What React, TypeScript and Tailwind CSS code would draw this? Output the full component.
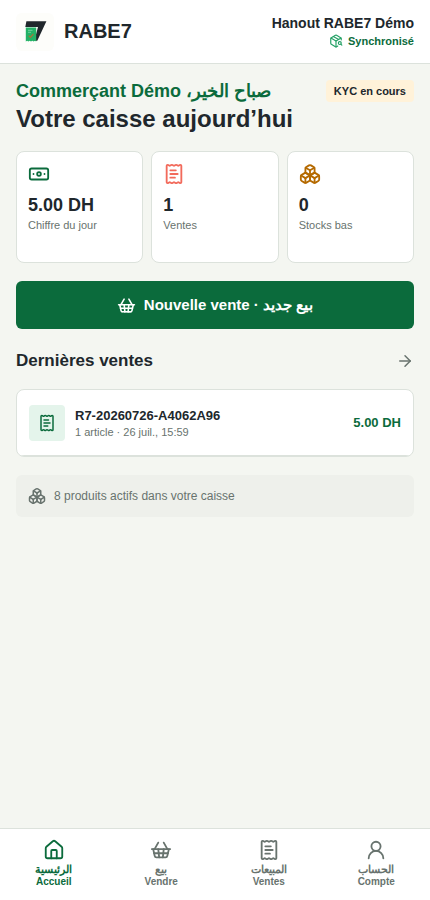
import {
  ArrowRight,
  Banknote,
  Boxes,
  House,
  PackageSearch,
  ReceiptText,
  ShoppingBasket,
  UserRound,
} from "lucide-react";

const stats = [
  { icon: Banknote, color: "text-[#0b6b3c]", value: "5.00 DH", label: "Chiffre du jour" },
  { icon: ReceiptText, color: "text-[#f26a5b]", value: "1", label: "Ventes" },
  { icon: Boxes, color: "text-[#b56a00]", value: "0", label: "Stocks bas" },
];

const tabs = [
  { icon: House, ar: "الرئيسية", fr: "Accueil", active: true },
  { icon: ShoppingBasket, ar: "بيع", fr: "Vendre", active: false },
  { icon: ReceiptText, ar: "المبيعات", fr: "Ventes", active: false },
  { icon: UserRound, ar: "الحساب", fr: "Compte", active: false },
];

const Logo = () => (
  <div className="flex size-[38px] items-center justify-center rounded-md bg-[#fdfdfa]">
    <svg width="38" height="38" viewBox="0 0 38 38">
      <path d="M10.4 8.300h20L21.300 27.800h-3L22 14H9.300z" fill="#20272c" />
      <path
        d="M9.800 14.600h10.400v14l-1.300-.9-1.300.9-1.300-.9-1.300.9-1.300-.9-1.300.9-1.300-.9-1.300.9z"
        fill="#23b266"
      />
      <path d="M12 17.300h4.500M12 19.300h3" stroke="#a5e3c0" strokeWidth="0.600" />
      <path d="M12.600 22.600l1.800 1.700 3-3.300" fill="none" stroke="#a8743a" strokeWidth="1.200" />
    </svg>
  </div>
);

const App = () => {
  return (
    <div className="min-h-screen bg-[#f4f6f1] font-['Liberation_Sans',sans-serif] text-[#20272c]">
      <header className="sticky top-0 flex h-16 items-center justify-between border-b border-[#dce2dc] bg-white px-4">
        <div className="flex items-center gap-[10px]">
          <Logo />
          <span className="pb-0.5 text-xl font-bold leading-6">RABE7</span>
        </div>
        <div className="flex flex-col items-end gap-[3px]">
          <div className="text-sm font-bold leading-4">Hanout RABE7 Démo</div>
          <div className="flex items-center gap-[5px] text-[11px] font-bold leading-[14px] text-[#0b6b3c]">
            <PackageSearch size={14} className="text-[#23a065]" />
            Synchronisé
          </div>
        </div>
      </header>

      <main className="px-4 pt-4">
        <div className="flex items-start justify-between">
          <div>
            <div dir="rtl" className="w-fit text-lg font-bold leading-[22px] text-[#0b6b3c]">
              صباح الخير، Commerçant Démo
            </div>
            <h1 className="mt-[2px] text-2xl font-bold leading-[29px]">Votre caisse aujourd’hui</h1>
          </div>
          <div className="flex h-[22px] items-center rounded bg-[#fff2d9] px-2 text-[11px] font-bold">
            KYC en cours
          </div>
        </div>

        <div className="mt-[18px] grid grid-cols-3 gap-2">
          {stats.map((s) => (
            <div key={s.label} className="h-28 rounded-lg border border-[#dce2dc] bg-white p-[11px]">
              <s.icon size={22} className={s.color} />
              <div className="mt-[9px] text-lg font-bold leading-[22px]">{s.value}</div>
              <div className="mt-[2px] text-[11px] leading-[14px] text-[#68736e]">{s.label}</div>
            </div>
          ))}
        </div>

        <button className="mt-[18px] flex h-12 w-full items-center justify-center gap-2 rounded-md bg-[#0b6b3c] text-[15px] font-bold text-white">
          <ShoppingBasket size={19} />
          <span>Nouvelle vente · بيع جديد</span>
        </button>

        <div className="mt-[18px] flex h-7 items-center justify-between">
          <h2 className="text-[17px] font-bold">Dernières ventes</h2>
          <ArrowRight size={18} className="text-[#68736e]" />
        </div>

        <div className="mt-[14px] overflow-hidden rounded-lg border border-[#dce2dc] bg-white">
          <div className="flex h-[66px] items-center gap-[10px] border-b border-[#dce2dc] px-3 pt-px">
            <div className="flex size-9 items-center justify-center rounded bg-[#e4f4eb] text-[#0b6b3c]">
              <ReceiptText size={18} />
            </div>
            <div className="flex-1 pt-px">
              <div className="text-[13px] font-bold leading-4">R7-20260726-A4062A96</div>
              <div className="mt-px text-[11px] leading-[14px] text-[#68736e]">
                1 article · 26 juil., 15:59
              </div>
            </div>
            <div className="text-[13px] font-bold text-[#0b6b3c]">5.00 DH</div>
          </div>
        </div>

        <div className="mt-[18px] flex h-[42px] items-center gap-2 rounded-md bg-[#eef0eb] px-3 text-xs text-[#68736e]">
          <Boxes size={18} />
          8 produits actifs dans votre caisse
        </div>
      </main>

      <nav className="fixed inset-x-0 bottom-0 grid h-[72px] grid-cols-4 border-t border-[#dce2dc] bg-white pt-[10px]">
        {tabs.map((t) => (
          <div
            key={t.fr}
            className={`flex flex-col items-center text-[10px] font-bold leading-3 ${
              t.active ? "text-[#0b6b3c]" : "text-[#68736e]"
            }`}
          >
            <t.icon size={22} />
            <span className="mt-[2px] pb-px text-[11px] leading-3">{t.ar}</span>
            <span>{t.fr}</span>
          </div>
        ))}
      </nav>
    </div>
  );
};

export default App;
